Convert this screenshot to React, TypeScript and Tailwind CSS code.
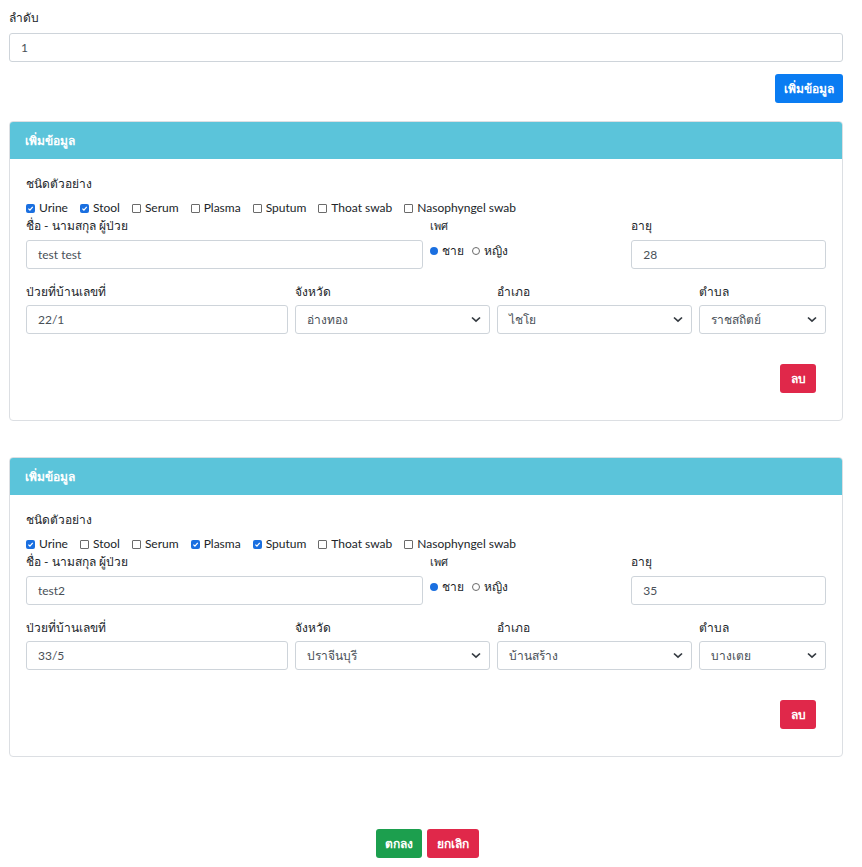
import React from "react";

const font = { fontFamily: 'Lato, "Open Sans", "Noto Sans", "Liberation Sans", sans-serif' };

function Check({ checked, label }: { checked: boolean; label: string }) {
  return (
    <span className="inline-flex items-center gap-[4px] mr-[12px]">
      {checked ? (
        <span className="inline-flex items-center justify-center w-[9px] h-[9px] rounded-[2px] bg-[#1a6fe0]">
          <svg width="7" height="7" viewBox="0 0 10 10">
            <path d="M2 5.2 L4.2 7.4 L8.2 2.8" stroke="white" strokeWidth="1.8" fill="none" />
          </svg>
        </span>
      ) : (
        <span className="inline-block w-[9px] h-[9px] rounded-[1px] border border-[#6b6b6b] bg-white" />
      )}
      <span>{label}</span>
    </span>
  );
}

function Radio({ checked, label }: { checked: boolean; label: string }) {
  return (
    <span className="inline-flex items-center gap-[4px] mr-[8px]">
      {checked ? (
        <span className="inline-block w-[8px] h-[8px] rounded-full bg-[#1a6fe0]" />
      ) : (
        <span className="inline-block w-[8px] h-[8px] rounded-full border border-[#6b6b6b] bg-white" />
      )}
      <span>{label}</span>
    </span>
  );
}

function Input({ value }: { value: string }) {
  return (
    <div className="h-[29px] w-full border border-[#ced4da] rounded-[3px] bg-white flex items-center px-[11px] text-[#495057]">
      {value}
    </div>
  );
}

function Select({ value }: { value: string }) {
  return (
    <div className="h-[29px] w-full border border-[#ced4da] rounded-[3px] bg-white flex items-center justify-between pl-[11px] pr-[8px] text-[#495057]">
      <span>{value}</span>
      <svg width="10" height="7" viewBox="0 0 10 7">
        <path d="M1 1.5 L5 5.2 L9 1.5" stroke="#343a40" strokeWidth="1.7" fill="none" />
      </svg>
    </div>
  );
}

type CardData = {
  checks: boolean[];
  name: string;
  age: string;
  house: string;
  province: string;
  district: string;
  sub: string;
};

const checkLabels = ["Urine", "Stool", "Serum", "Plasma", "Sputum", "Thoat swab", "Nasophyngel swab"];

function Card({ d }: { d: CardData }) {
  return (
    <div className="border border-[#dcdfe3] rounded-[4px] bg-white overflow-hidden">
      <div className="h-[37px] bg-[#5bc4da] text-white flex items-center px-[15px] font-semibold">
        เพิ่มข้อมูล
      </div>
      <div className="px-[16px] pt-[17px] pb-[27px]">
        <div className="leading-[16px]">ชนิดตัวอย่าง</div>
        <div className="leading-[16px] mt-[8px] flex items-center">
          {checkLabels.map((l, i) => (
            <Check key={l} checked={d.checks[i]} label={l} />
          ))}
        </div>
        <div className="grid grid-cols-12 gap-x-[7px] mt-[2px]">
          <div className="col-span-6">
            <div className="leading-[16px]">ชื่อ - นามสกุล ผู้ป่วย</div>
            <div className="mt-[6px]"><Input value={d.name} /></div>
          </div>
          <div className="col-span-3">
            <div className="leading-[16px] text-[11px]">เพศ</div>
            <div className="mt-[8px] flex items-center">
              <Radio checked label="ชาย" />
              <Radio checked={false} label="หญิง" />
            </div>
          </div>
          <div className="col-span-3">
            <div className="leading-[16px]">อายุ</div>
            <div className="mt-[6px]"><Input value={d.age} /></div>
          </div>
        </div>
        <div className="grid grid-cols-12 gap-x-[7px] mt-[15px]">
          <div className="col-span-4">
            <div className="leading-[16px]">ป่วยที่บ้านเลขที่</div>
            <div className="mt-[5px]"><Input value={d.house} /></div>
          </div>
          <div className="col-span-3">
            <div className="leading-[16px]">จังหวัด</div>
            <div className="mt-[5px]"><Select value={d.province} /></div>
          </div>
          <div className="col-span-3">
            <div className="leading-[16px]">อำเภอ</div>
            <div className="mt-[5px]"><Select value={d.district} /></div>
          </div>
          <div className="col-span-2">
            <div className="leading-[16px]">ตำบล</div>
            <div className="mt-[5px]"><Select value={d.sub} /></div>
          </div>
        </div>
        <div className="flex justify-end mt-[30px] pr-[10px]">
          <button className="h-[29px] w-[36px] rounded-[3px] bg-[#e0284a] text-white font-semibold">ลบ</button>
        </div>
      </div>
    </div>
  );
}

export default function App() {
  const cards: CardData[] = [
    {
      checks: [true, true, false, false, false, false, false],
      name: "test test",
      age: "28",
      house: "22/1",
      province: "อ่างทอง",
      district: "ไชโย",
      sub: "ราชสถิตย์",
    },
    {
      checks: [true, false, false, true, true, false, false],
      name: "test2",
      age: "35",
      house: "33/5",
      province: "ปราจีนบุรี",
      district: "บ้านสร้าง",
      sub: "บางเตย",
    },
  ];
  return (
    <div className="w-[852px] min-h-[867px] bg-white text-[12px] text-[#212529] px-[9px] pt-[10px]" style={font}>
      <div className="leading-[16px]">ลำดับ</div>
      <div className="mt-[7px]"><Input value="1" /></div>
      <div className="flex justify-end mt-[12px]">
        <button className="h-[29px] px-[9px] rounded-[3px] bg-[#0a7cf2] text-white font-semibold">เพิ่มข้อมูล</button>
      </div>
      <div className="mt-[18px]"><Card d={cards[0]} /></div>
      <div className="mt-[36px]"><Card d={cards[1]} /></div>
      <div className="flex justify-center gap-[5px] mt-[72px] pl-[2px]">
        <button className="h-[29px] w-[46px] rounded-[3px] bg-[#1c9f4e] text-white font-semibold">ตกลง</button>
        <button className="h-[29px] w-[52px] rounded-[3px] bg-[#e0284a] text-white font-semibold">ยกเลิก</button>
      </div>
    </div>
  );
}
